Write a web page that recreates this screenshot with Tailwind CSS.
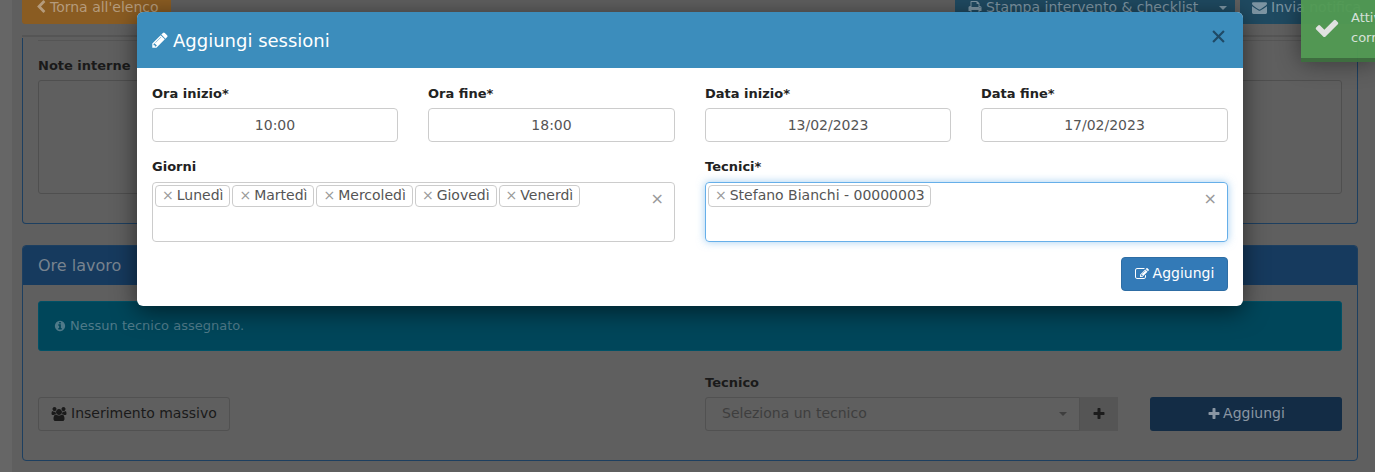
<!DOCTYPE html>
<html lang="it">
  <head>
    <meta charset="UTF-8" />
    <title>Aggiungi sessioni</title>
    <script src="https://cdn.jsdelivr.net/npm/@tailwindcss/browser@4"></script>
  </head>
  <body class="font-['DejaVu_Sans',sans-serif] text-[13px]">
    <div class="relative w-[1375px] h-[472px] overflow-hidden bg-[#5f5f5f] flex">
      <div class="w-[12px] shrink-0 bg-[#666666]"></div>

      <!-- page behind the modal -->
      <div class="flex-1 pl-[10px] pr-[17px]">
        <div class="h-[24px] flex justify-between items-end">
          <div class="w-[149px] h-[34px] bg-[#8a5c22] rounded-[3px] text-[#b59b7c] text-[14px] flex items-center pl-[12px] gap-[2px] shrink-0">
            <svg class="w-[14px] h-[14px]" viewBox="0 0 1792 1792" fill="currentColor"><path d="M1427 301l-531 531 531 531q19 19 19 45t-19 45l-166 166q-19 19-45 19t-45-19l-742-742q-19-19-19-45t19-45l742-742q19-19 45-19t45 19l166 166q19 19 19 45t-19 45z"/></svg>
            <span>Torna all'elenco</span>
          </div>
          <div class="flex gap-[5px] -mr-[17px]">
            <div class="relative w-[280px] h-[34px] bg-[#1f4a61] text-[#7d95a3] text-[14px] flex items-center pl-[13px] gap-[4px]">
              <svg class="w-[14px] h-[14px]" viewBox="0 0 1792 1792" fill="currentColor"><path d="M448 1536h896v-256h-896v256zm0-640h896v-384h-160q-40 0-68-28t-28-68v-160h-640v640zm1152 64q0-26-19-45t-45-19-45 19-19 45 19 45 45 19 45-19 19-45zm128 0v416q0 13-9.5 22.5t-22.5 9.5h-224v160q0 40-28 68t-68 28h-960q-40 0-68-28t-28-68v-160h-224q-13 0-22.5-9.5t-9.5-22.5v-416q0-79 56.5-135.5t135.5-56.5h64v-544q0-40 28-68t68-28h672q40 0 88 20t76 48l152 152q28 28 48 76t20 88v256h64q79 0 135.5 56.5t56.5 135.5z"/></svg>
              <span>Stampa intervento &amp; checklist</span>
              <span class="absolute left-[264px] top-[16px] border-x-[4px] border-x-transparent border-t-[4px] border-t-[#7d95a3]"></span>
            </div>
            <div class="w-[135px] h-[34px] bg-[#1f4a61] text-[#7d95a3] text-[14px] flex items-center pl-[12px] gap-[4px] whitespace-nowrap overflow-hidden">
              <svg class="w-[15px] h-[15px] shrink-0" viewBox="0 0 1792 1792" fill="currentColor"><path d="M1792 710v794q0 66-47 113t-113 47h-1472q-66 0-113-47t-47-113v-794q44 49 101 87 362 246 497 345 57 42 92.5 65.5t94.5 48 110 24.5h2q51 0 110-24.5t94.5-48 92.5-65.5q170-123 498-345 57-39 100-87zm0-294q0 79-49 151t-122 123q-376 261-468 325-10 7-42.5 30.5t-54 38-52 32.5-57.5 27-50 9h-2q-23 0-50-9t-57.5-27-52-32.5-54-38-42.5-30.5q-91-64-262-182.5t-205-142.5q-62-42-117-115.5t-55-136.5q0-78 41.5-130t118.5-52h1472q65 0 112.5 47t47.5 113z"/></svg>
              <span>Invia notifica</span>
            </div>
          </div>
        </div>

        <div class="mt-[11px] h-[2px] bg-[#555555]"></div>
        <div class="mt-[1px] h-[186px] border border-[#1d3f60] border-t-0 rounded-b-[4px] px-[15px] pt-[2px]">
          <div class="h-[1px] bg-[#555555]"></div>
          <div class="mt-[14px] h-[20px] font-bold text-[#1a1a1a] leading-[22px]">Note interne</div>
          <div class="mt-[5px] h-[114px] border border-[#4f4f4f] rounded-[3px]"></div>
        </div>

        <div class="mt-[21px] h-[216px] border border-[#1d3f60] rounded-[4px] overflow-hidden">
          <div class="-mx-px -mt-px h-[40px] bg-[#163a5e] text-[#78838f] text-[16px] leading-[42px] pl-[16px]">Ore lavoro</div>
          <div class="px-[15px] pt-[16px]">
            <div class="h-[50px] bg-[#00465a] border border-[#005166] rounded-[3px] text-[#4f7a89] text-[13px] flex items-center pl-[15px] gap-[4px]">
              <svg class="w-[12px] h-[12px]" viewBox="0 0 1792 1792" fill="currentColor"><path d="M1152 1376v-160q0-14-9-23t-23-9h-96v-512q0-14-9-23t-23-9h-320q-14 0-23 9t-9 23v160q0 14 9 23t23 9h96v320h-96q-14 0-23 9t-9 23v160q0 14 9 23t23 9h448q14 0 23-9t9-23zm-128-896v-160q0-14-9-23t-23-9h-192q-14 0-23 9t-9 23v160q0 14 9 23t23 9h192q14 0 23-9t9-23zm640 416q0 209-103 385.5t-279.5 279.5-385.5 103-385.5-103-279.5-279.5-103-385.5 103-385.5 279.5-279.5 385.5-103 385.5 103 279.5 279.5 103 385.5z"/></svg>
              <span>Nessun tecnico assegnato.</span>
            </div>
            <div class="mt-[21px] flex items-end">
              <div class="w-[192px] h-[34px] border border-[#515151] rounded-[3px] text-[#1a1a1a] text-[14px] flex items-center pl-[12px] pb-[1px] gap-[4px]">
                <svg class="w-[16px] h-[14px]" viewBox="0 0 1920 1792" fill="currentColor"><path d="M593 896q-162 5-265 128h-134q-82 0-138-40.5t-56-118.5q0-353 124-353 6 0 43.5 21t97.5 42.5 119 21.5q67 0 133-23-5 37-5 66 0 139 81 256zm1071 637q0 120-73 189.5t-194 69.5h-874q-121 0-194-69.5t-73-189.5q0-53 3.5-103.5t14-109 26.5-108.5 43-97.5 62-81 85.5-53.5 111.5-20q10 0 43 21.5t73 48 107 48 135 21.5 135-21.5 107-48 73-48 43-21.5q61 0 111.5 20t85.5 53.5 62 81 43 97.5 26.5 108.5 14 109 3.5 103.5zm-1024-1277q0 106-75 181t-181 75-181-75-75-181 75-181 181-75 181 75 75 181zm704 384q0 159-112.5 271.5t-271.5 112.5-271.5-112.5-112.5-271.5 112.5-271.5 271.5-112.5 271.5 112.5 112.5 271.5zm576 225q0 78-56 118.5t-138 40.5h-134q-103-123-265-128 81-117 81-256 0-29-5-66 66 23 133 23 59 0 119-21.5t97.5-42.5 43.5-21q124 0 124 353zm-128-609q0 106-75 181t-181 75-181-75-75-181 75-181 181-75 181 75 75 181z"/></svg>
                <span>Inserimento massivo</span>
              </div>
              <div class="ml-[475px] w-[413px]">
                <div class="h-[20px] mb-[5px] font-bold text-[#1a1a1a] leading-[22px]">Tecnico</div>
                <div class="flex h-[34px]">
                  <div class="w-[375px] border border-[#515151] rounded-l-[3px] text-[#3e3e3e] text-[14px] flex items-center pl-[16px] pb-[1px] pr-[12px] justify-between">
                    <span>Seleziona un tecnico</span>
                    <span class="border-x-[4px] border-x-transparent border-t-[4px] border-t-[#3e3e3e]"></span>
                  </div>
                  <div class="w-[38px] bg-[#555555] text-[#1c1c1c] flex items-center justify-center">
                    <svg class="w-[14px] h-[14px]" viewBox="0 0 1792 1792" fill="currentColor"><path d="M1600 736v192q0 40-28 68t-68 28h-416v416q0 40-28 68t-68 28h-192q-40 0-68-28t-28-68v-416h-416q-40 0-68-28t-28-68v-192q0-40 28-68t68-28h416v-416q0-40 28-68t68-28h192q40 0 68 28t28 68v416h416q40 0 68 28t28 68z"/></svg>
                  </div>
                </div>
              </div>
              <div class="ml-[32px] w-[192px] h-[34px] bg-[#132c45] rounded-[3px] text-[#8a96a3] text-[14px] flex items-center justify-center pb-[1px] gap-[2px]">
                <svg class="w-[14px] h-[14px]" viewBox="0 0 1792 1792" fill="currentColor"><path d="M1600 736v192q0 40-28 68t-68 28h-416v416q0 40-28 68t-68 28h-192q-40 0-68-28t-28-68v-416h-416q-40 0-68-28t-28-68v-192q0-40 28-68t68-28h416v-416q0-40 28-68t68-28h192q40 0 68 28t28 68v416h416q40 0 68 28t28 68z"/></svg>
                <span>Aggiungi</span>
              </div>
            </div>
          </div>
        </div>
      </div>

      <!-- toast -->
      <div class="absolute left-[1301px] top-0 w-[74px] h-[62px] bg-[#529b53] border-b-[4px] border-b-[#3d6e3e] opacity-95 shadow-[0_0_25px_rgba(0,0,0,0.45)] text-[#dfe9df] text-[13px] leading-[20px] overflow-hidden">
        <svg class="absolute left-[13px] top-[15px] w-[26px] h-[26px] text-[#e8e8e8]" viewBox="0 0 1792 1792" fill="currentColor"><path d="M1671 566q0 40-28 68l-724 724-136 136q-28 28-68 28t-68-28l-136-136-362-362q-28-28-28-68t28-68l136-136q28-28 68-28t68 28l294 295 656-657q28-28 68-28t68 28l136 136q28 28 28 68z"/></svg>
        <div class="absolute left-[50px] top-[8px] whitespace-nowrap">Attività<br />correttamente</div>
      </div>

      <!-- modal -->
      <div class="absolute left-[137px] top-[12px] w-[1106px] h-[294px] bg-white rounded-[6px] overflow-hidden">
        <div class="h-[56px] bg-[#3c8dbc] text-white flex items-center px-[15px] relative">
          <svg class="w-[18px] h-[18px] -ml-px mr-[4px]" viewBox="0 0 1792 1792" fill="currentColor"><path d="M491 1536l91-91-235-235-91 91v107h128v128h107zm523-928q0-22-22-22-10 0-17 7l-542 542q-7 7-7 17 0 22 22 22 10 0 17-7l542-542q7-7 7-17zm-54-192l416 416-832 832h-416v-416zm683 96q0 53-37 90l-166 166-416-416 166-165q36-38 90-38 53 0 91 38l235 234q37 39 37 91z"/></svg>
          <span class="text-[18px]">Aggiungi sessioni</span>
          <svg class="absolute right-[18px] top-[18px] w-[13px] h-[13px] text-[#1f4a66]" viewBox="0 0 12 12" fill="none" stroke="currentColor" stroke-width="2"><path d="M1 1l10 10M11 1L1 11"/></svg>
        </div>
        <div class="p-[15px] text-[#555555]">
          <div class="grid grid-cols-[246px_247px_246px_247px] gap-x-[30px]">
            <div>
              <div class="h-[20px] mb-[5px] font-bold text-[#222222] leading-[22px]">Ora inizio*</div>
              <div class="h-[34px] border border-[#cccccc] rounded-[4px] text-[14px] flex items-center justify-center">10:00</div>
            </div>
            <div>
              <div class="h-[20px] mb-[5px] font-bold text-[#222222] leading-[22px]">Ora fine*</div>
              <div class="h-[34px] border border-[#cccccc] rounded-[4px] text-[14px] flex items-center justify-center">18:00</div>
            </div>
            <div>
              <div class="h-[20px] mb-[5px] font-bold text-[#222222] leading-[22px]">Data inizio*</div>
              <div class="h-[34px] border border-[#cccccc] rounded-[4px] text-[14px] flex items-center justify-center">13/02/2023</div>
            </div>
            <div>
              <div class="h-[20px] mb-[5px] font-bold text-[#222222] leading-[22px]">Data fine*</div>
              <div class="h-[34px] border border-[#cccccc] rounded-[4px] text-[14px] flex items-center justify-center">17/02/2023</div>
            </div>
          </div>
          <div class="grid grid-cols-2 gap-x-[30px] mt-[15px]">
            <div>
              <div class="h-[20px] mb-[5px] font-bold text-[#222222] leading-[20px]">Giorni</div>
              <div class="relative h-[60px] border border-[#cccccc] rounded-[4px] pl-[2px] pt-[2px] flex gap-[2px] items-start text-[14px]">
                <span class="h-[22px] border border-[#cccccc] rounded-[4px] pl-[6px] pr-[6px] pb-[1px] flex items-center gap-[3px]"><span class="text-[#999999]">×</span>Lunedì</span>
                <span class="h-[22px] border border-[#cccccc] rounded-[4px] pl-[6px] pr-[6px] pb-[1px] flex items-center gap-[3px]"><span class="text-[#999999]">×</span>Martedì</span>
                <span class="h-[22px] border border-[#cccccc] rounded-[4px] pl-[6px] pr-[6px] pb-[1px] flex items-center gap-[3px]"><span class="text-[#999999]">×</span>Mercoledì</span>
                <span class="h-[22px] border border-[#cccccc] rounded-[4px] pl-[6px] pr-[6px] pb-[1px] flex items-center gap-[3px]"><span class="text-[#999999]">×</span>Giovedì</span>
                <span class="h-[22px] border border-[#cccccc] rounded-[4px] pl-[6px] pr-[6px] pb-[1px] flex items-center gap-[3px]"><span class="text-[#999999]">×</span>Venerdì</span>
                <span class="absolute right-[10px] top-[6px] text-[#999999] text-[16px] leading-[20px]">×</span>
              </div>
            </div>
            <div>
              <div class="h-[20px] mb-[5px] font-bold text-[#222222] leading-[20px]">Tecnici*</div>
              <div class="relative h-[60px] border border-[#66afe9] rounded-[4px] pl-[2px] pt-[2px] flex items-start text-[14px] shadow-[0_0_8px_rgba(102,175,233,0.6)]">
                <span class="h-[22px] border border-[#cccccc] rounded-[4px] pl-[6px] pr-[5px] pb-[1px] flex items-center gap-[3px]"><span class="text-[#999999]">×</span>Stefano Bianchi - 00000003</span>
                <span class="absolute right-[10px] top-[6px] text-[#999999] text-[16px] leading-[20px]">×</span>
              </div>
            </div>
          </div>
          <div class="flex justify-end mt-[15px]">
            <div class="w-[107px] h-[34px] bg-[#337ab7] border border-[#2e6da4] rounded-[4px] text-white text-[14px] flex items-center justify-center pb-[1px] gap-[4px]">
              <svg class="w-[14px] h-[14px]" viewBox="0 0 1792 1792" fill="currentColor"><path d="M888 1184l116-116-152-152-116 116v56h96v96h56zm440-720q-16-16-33 1l-350 350q-17 17-1 33t33-1l350-350q17-17 1-33zm80 594v190q0 119-84.5 203.5t-203.5 84.5h-832q-119 0-203.5-84.5t-84.5-203.5v-832q0-119 84.5-203.5t203.5-84.5h832q63 0 117 25 15 7 18 23 3 17-9 29l-49 49q-14 14-32 8-23-6-45-6h-832q-66 0-113 47t-47 113v832q0 66 47 113t113 47h832q66 0 113-47t47-113v-126q0-13 9-22l64-64q15-15 35-7t20 29zm-96-738l288 288-672 672h-288v-288zm444 132l-92 92-288-288 92-92q28-28 68-28t68 28l152 152q28 28 28 68t-28 68z"/></svg>
              <span>Aggiungi</span>
            </div>
          </div>
        </div>
      </div>
      <div class="absolute left-[137px] top-[12px] w-[1106px] h-[294px] rounded-[6px] shadow-[0_5px_25px_rgba(0,0,0,0.55)] pointer-events-none"></div>
    </div>
  </body>
</html>
